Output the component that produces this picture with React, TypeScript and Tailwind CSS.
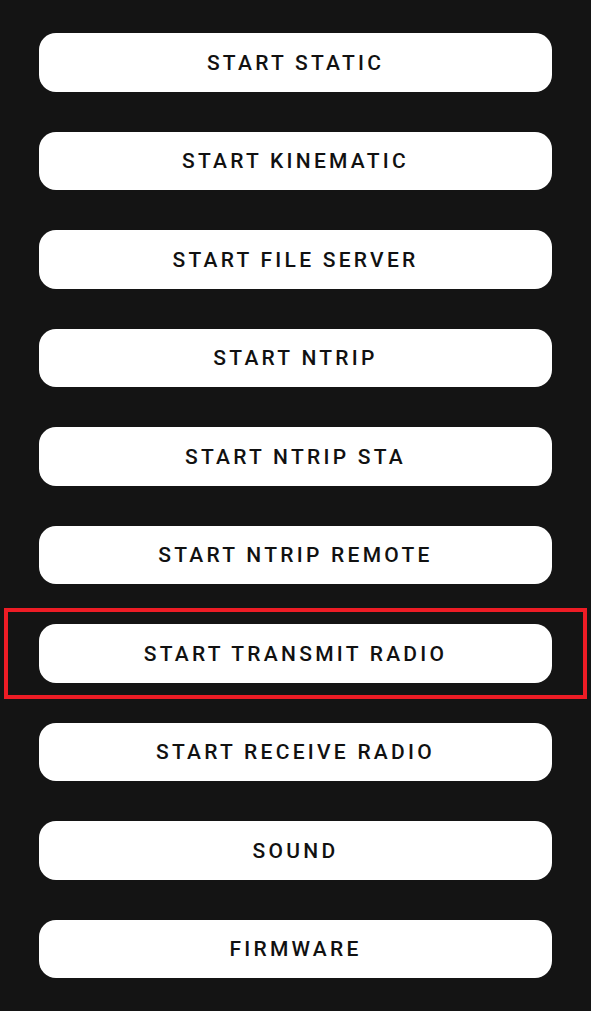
const items = [
  'START STATIC',
  'START KINEMATIC',
  'START FILE SERVER',
  'START NTRIP',
  'START NTRIP STA',
  'START NTRIP REMOTE',
  'START TRANSMIT RADIO',
  'START RECEIVE RADIO',
  'SOUND',
  'FIRMWARE',
];

export default function App() {
  return (
    <div
      className="h-[1011px] w-[591px] overflow-hidden bg-[#141414] pt-[33px] px-[39px] flex flex-col gap-[40px]"
      style={{ fontFamily: 'Roboto, "Noto Sans", sans-serif' }}
    >
      {items.map((label) => (
        <div key={label} className="relative">
          <button className="w-full h-[58.5px] pt-[2px] rounded-[17px] bg-white text-[#111] text-[21px] font-medium tracking-[0.155em] flex items-center justify-center">
            {label}
          </button>
          {label === 'START TRANSMIT RADIO' && (
            <div className="absolute -left-[35px] -right-[35px] -top-[16px] -bottom-[16.5px] border-[4.5px] border-[#ee1c25] pointer-events-none" />
          )}
        </div>
      ))}
    </div>
  );
}
